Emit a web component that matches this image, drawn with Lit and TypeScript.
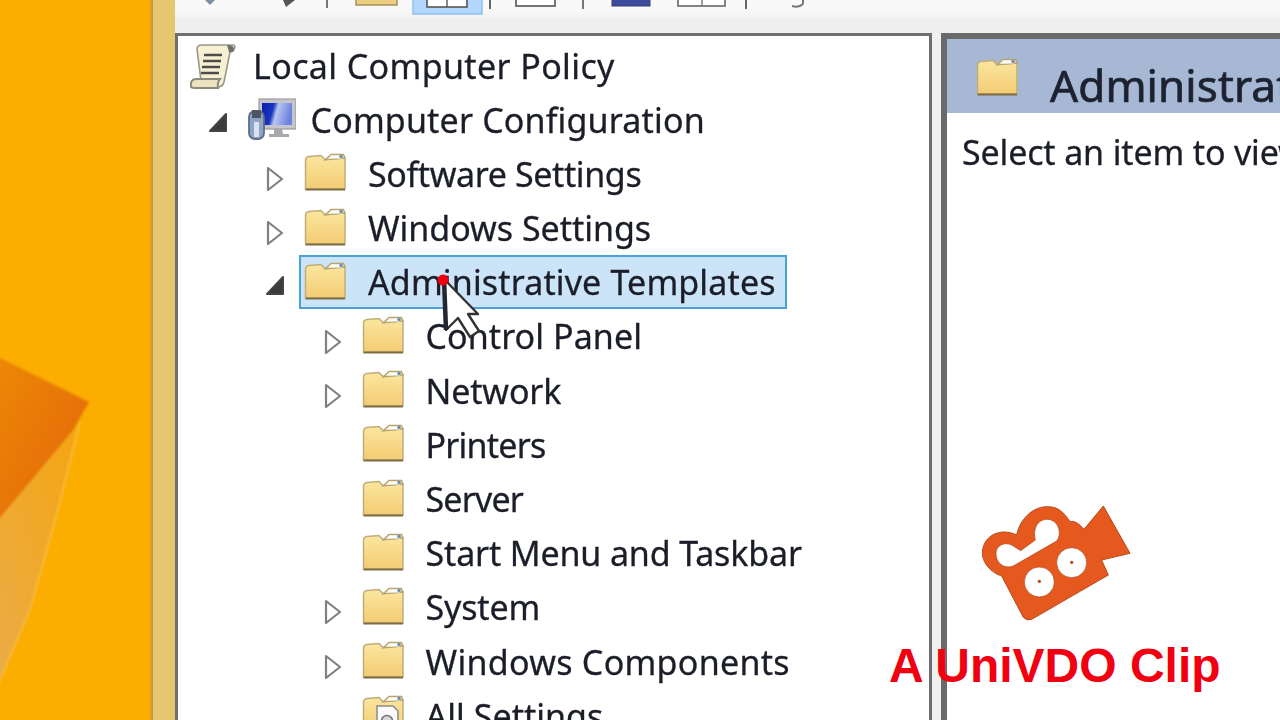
import { LitElement, html, css, svg } from "lit";
import { customElement } from "lit/decorators.js";

type Node = { label: string; depth: number; ls: number; exp?: "open" | "closed"; icon?: "folder" | "scroll" | "computer" | "settings"; sel?: boolean };

const NODES: Node[] = [
  { label: "Local Computer Policy", depth: 0, ls: 0.38, icon: "scroll" },
  { label: "Computer Configuration", depth: 1, ls: 0.17, exp: "open", icon: "computer" },
  { label: "Software Settings", depth: 2, ls: -0.38, exp: "closed" },
  { label: "Windows Settings", depth: 2, ls: -0.02, exp: "closed" },
  { label: "Administrative Templates", depth: 2, ls: 0.14, exp: "open", sel: true },
  { label: "Control Panel", depth: 3, ls: 0.08, exp: "closed" },
  { label: "Network", depth: 3, ls: -0.15, exp: "closed" },
  { label: "Printers", depth: 3, ls: -0.78 },
  { label: "Server", depth: 3, ls: -0.82 },
  { label: "Start Menu and Taskbar", depth: 3, ls: -0.15 },
  { label: "System", depth: 3, ls: -0.15, exp: "closed" },
  { label: "Windows Components", depth: 3, ls: 0.29, exp: "closed" },
  { label: "All Settings", depth: 3, ls: 0.03, icon: "settings" },
];

const folderBody = svg`
  <path d="M1.5 37V8.5Q1.5 5 5 4.5L17 3.5L21 7.5L41 6V37Z" fill="url(#fg)" stroke="#bfae7c" stroke-width="1.5"/>
  <path d="M21 8L27 2.5H39.5L41 6Z" fill="#efe4c0" stroke="#b5a472" stroke-width="1.3"/>
  <path d="M27 3.5H36L38 6.5H25Z" fill="#fdfdfd"/>
  <circle cx="37" cy="4.4" r="1.7" fill="#6f8bb0"/>
  <path d="M1.5 37.5H41" stroke="#7f6d42" stroke-width="2.2"/>`;

const folderDefs = svg`<defs><linearGradient id="fg" x1="0" y1="0" x2="0" y2="1"><stop offset="0" stop-color="#fbe69e"/><stop offset="1" stop-color="#f3cc74"/></linearGradient></defs>`;

function folderIcon() {
  return html`<svg class="ic folder" viewBox="0 0 42 39" width="42" height="39">${folderDefs}${folderBody}</svg>`;
}

function settingsIcon() {
  return html`<svg class="ic folder" viewBox="0 0 42 39" width="42" height="39">${folderDefs}${folderBody}
    <path d="M15 12H31L36 17V39H15Z" fill="#fafafa" stroke="#8b8b8b" stroke-width="1.5"/>
    <circle cx="25" cy="27" r="5.5" fill="#d8d8d8" stroke="#777" stroke-width="1.6"/></svg>`;
}

function scrollIcon() {
  return html`<svg class="ic scroll" viewBox="0 0 46 46" width="46" height="46">
    <path d="M7 5Q7 1 12 1H44Q46 3 43 7L40 8L34 38Q33 42 29 43H5L11 37Z" fill="#f7f0d2" stroke="#9a978a" stroke-width="1.6"/>
    <path d="M37 1Q44 1 44 5Q44 9 39 8Z" fill="#6f6f6f"/>
    <path d="M14 11H32M13 17H31M12 23H30M11 29H29" stroke="#4c4c4c" stroke-width="2.6"/>
    <path d="M1 43Q0 35 6 35H30Q27 38 28 44H5Q2 44 1 43Z" fill="#ebe3bf" stroke="#8d8a7c" stroke-width="2"/>
  </svg>`;
}

function computerIcon() {
  return html`<svg class="ic computer" viewBox="0 0 48 42" width="48" height="42">
    <defs><linearGradient id="sc" x1="0" y1="0" x2="1" y2="0.2"><stop offset="0" stop-color="#0a1fa8"/><stop offset="0.4" stop-color="#1b36c4"/><stop offset="0.55" stop-color="#b9c6f0"/><stop offset="1" stop-color="#6e83df"/></linearGradient></defs>
    <rect x="11" y="1" width="37" height="30" fill="#c4c6cb" stroke="#9a9ca2" stroke-width="1.2"/>
    <rect x="14" y="5" width="30" height="22" fill="url(#sc)"/>
    <path d="M26 31H34L35 36H41V39H21V36H26Z" fill="#a6a8ad"/>
    <rect x="1" y="13" width="15" height="28" rx="6" fill="#8ea4c4" stroke="#5f6d86" stroke-width="1.8"/>
    <path d="M6 24H11V39H6Z" fill="#d9e2ef"/>
    <rect x="4" y="12" width="9" height="8" fill="#4b5566"/>
  </svg>`;
}

function expander(kind?: "open" | "closed") {
  if (kind === "open")
    return html`<svg class="exp" viewBox="0 0 20 24" width="20" height="24"><path d="M18 4V21H2Z" fill="#3b3b3b" stroke="#444" stroke-width="2" stroke-linejoin="round"/></svg>`;
  if (kind === "closed")
    return html`<svg class="exp closed" viewBox="0 0 20 26" width="20" height="26"><path d="M3 2L17 13L3 24Z" fill="#fff" stroke="#80807e" stroke-width="2.2" stroke-linejoin="round"/></svg>`;
  return html``;
}

function nodeIcon(n: Node) {
  if (n.icon === "scroll") return scrollIcon();
  if (n.icon === "computer") return computerIcon();
  if (n.icon === "settings") return settingsIcon();
  return folderIcon();
}

@customElement("app-root")
export class AppRoot extends LitElement {
  static styles = css`
    :host {
      display: block;
      width: 1280px;
      height: 720px;
      overflow: hidden;
      position: relative;
      font-family: "Noto Sans", "Open Sans", sans-serif;
      color: #1b1e28;
    }
    .page { display: flex; width: 100%; height: 100%; }
    .wall {
      width: 153px;
      flex: none;
      position: relative;
      background: #fbad00;
      overflow: hidden;
      box-shadow: inset -3px 0 2px -1px #b89a48;
    }
    .wall svg { position: absolute; left: 0; top: 0; overflow: visible; filter: blur(1px); }
    .strip { width: 22px; flex: none; background: #e7c671; }
    .win {
      flex: 1;
      min-width: 0;
      display: flex;
      flex-direction: column;
      background: #f0f0f0;
      filter: blur(0.7px);
    }
    .toolbar { height: 33px; flex: none; background: linear-gradient(#f9f9f9 0, #f8f8f8 12px, #eeeeee 20px, #f0f0f0 100%); }
    .toolbar svg { display: block; }
    .panes { flex: 1; min-height: 0; display: flex; }
    .tree {
      width: 757px;
      flex: none;
      box-sizing: border-box;
      background: #fff;
      border: solid #6f6f6f;
      border-width: 3px 3px 0 3px;
      padding: 2px 0 0 6px;
      overflow: hidden;
    }
    .row { height: 54.2px; display: flex; align-items: stretch; white-space: nowrap; }
    .slot { width: 34px; flex: none; display: flex; align-items: center; }
    .exp { display: block; margin-top: 6px; }
    .exp.closed { margin-top: 11px; }
    .item {
      display: flex;
      align-items: center;
      border: 2px solid transparent;
      box-sizing: border-box;
      height: 54px;
      padding: 0 9px 0 3px;
    }
    .item.sel { background: #cce4f7; border-color: #4aa3d6; }
    .ic { display: block; flex: none; }
    .folder { margin-right: 22px; margin-top: -3px; }
    .scroll { margin: 3px 17px 0 1px; }
    .computer { margin: -1px 15px 0 1px; }
    .label { font-size: 34px; line-height: 1; padding-top: 1px; -webkit-text-stroke: 0.3px currentColor; }
    .gap { width: 9px; flex: none; }
    .detail {
      flex: 1;
      min-width: 0;
      background: #fff;
      border: solid #6a6a6a;
      border-width: 6px 0 0 6px;
      display: flex;
      flex-direction: column;
      overflow: hidden;
    }
    .head {
      height: 74px;
      flex: none;
      background: #a6b8d4;
      display: flex;
      align-items: center;
      padding-left: 29px;
      white-space: nowrap;
    }
    .head .ic { margin: 0 32px 0 0; }
    .head span { font-size: 44px; letter-spacing: 0.1px; color: #1c2230; padding-top: 18px; -webkit-text-stroke: 0.7px currentColor; }
    .hint { font-size: 34px; line-height: 1; padding: 22px 0 0 15px; white-space: nowrap; letter-spacing: -0.15px; -webkit-text-stroke: 0.3px currentColor; }
    .cursor { position: absolute; left: 430px; top: 265px; filter: blur(0.6px); }
    .logo { position: absolute; left: 960px; top: 490px; filter: blur(0.5px); }
    .brand {
      position: absolute;
      left: 889px;
      top: 639px;
      font: bold 48px/54px "Liberation Sans", Arial, sans-serif;
      color: #f00010;
      white-space: nowrap;
    }
  `;

  private toolbarArt() {
    return html`<svg viewBox="0 0 1105 33" width="1105" height="33">
      <path d="M30 0H40L35 5Z" fill="#7d8ea6"/>
      <path d="M108 0H120L111 7Z" fill="#555"/>
      <rect x="151" y="0" width="2" height="8" fill="#777"/>
      <rect x="181" y="-4" width="41" height="9" fill="#eccd7f" stroke="#a08a58" stroke-width="1.4"/>
      <rect x="238" y="-2" width="69" height="16" fill="#b3d7fb" stroke="#8fc0f2" stroke-width="1.5"/>
      <rect x="252" y="-4" width="40" height="11" fill="#fff" stroke="#555" stroke-width="1.6"/>
      <path d="M272 0V7" stroke="#555" stroke-width="1.4"/>
      <rect x="314" y="0" width="2" height="9" fill="#666"/>
      <rect x="341" y="-4" width="39" height="10" fill="#fff" stroke="#666" stroke-width="1.8"/>
      <rect x="407" y="0" width="2" height="9" fill="#777"/>
      <rect x="437" y="-4" width="38" height="10" fill="#3d4a9e" stroke="#36406e" stroke-width="1"/>
      <rect x="503" y="-4" width="47" height="10" fill="#fff" stroke="#666" stroke-width="1.6"/>
      <path d="M527 0V6" stroke="#777" stroke-width="1.4"/>
      <rect x="570" y="0" width="2" height="9" fill="#666"/>
      <path d="M628 4Q624 8 617 6M628 0V4" stroke="#777" stroke-width="2" fill="none"/>
    </svg>`;
  }

  render() {
    return html`
      <div class="page">
        <div class="wall">
          <svg viewBox="0 0 153 720" width="153" height="720">
            <defs>
              <linearGradient id="ora" x1="0" y1="0" x2="1" y2="1"><stop offset="0" stop-color="#ee8a06"/><stop offset="1" stop-color="#e2640a"/></linearGradient>
              <linearGradient id="wed" x1="1" y1="0" x2="0" y2="1"><stop offset="0" stop-color="#f6a50f"/><stop offset="1" stop-color="#e8ad4e"/></linearGradient>
            </defs>
            <path d="M-12 352L89 402L72 432L-12 534Z" fill="url(#ora)"/>
            <path d="M80 422L58 510L30 610L-12 708V532Z" fill="url(#wed)"/>
            <path d="M80 422L58 510L30 610L-12 708" fill="none" stroke="#f9bb3c" stroke-width="2"/>
          </svg>
        </div>
        <div class="strip"></div>
        <div class="win">
          <div class="toolbar">${this.toolbarArt()}</div>
          <div class="panes">
            <div class="tree">
              ${NODES.map((n) => html`
                <div class="row" style="padding-left:${n.depth ? n.depth * 57.5 - 34 : 0}px">
                  ${n.depth ? html`<div class="slot">${expander(n.exp)}</div>` : ""}
                  <div class="item ${n.sel ? "sel" : ""}">
                    ${nodeIcon(n)}
                    <span class="label" style="letter-spacing:${n.ls}px">${n.label}</span>
                  </div>
                </div>`)}
            </div>
            <div class="gap"></div>
            <div class="detail">
              <div class="head">${folderIcon()}<span>Administrative Templates</span></div>
              <div class="hint">Select an item to view its description.</div>
            </div>
          </div>
        </div>
      </div>
      <svg class="cursor" viewBox="0 0 60 80" width="60" height="80">
        <path d="M14 14L16 65L28 53L40 72L49 66L38 49L48 49Z" fill="#fff" stroke="#333" stroke-width="2.4" stroke-linejoin="round"/>
        <path d="M14 14L16 65" stroke="#22262e" stroke-width="4.5"/>
        <circle cx="13" cy="15" r="5.5" fill="#ee0010"/>
      </svg>
      <svg class="logo" viewBox="0 0 600 450" width="200" height="150">
        <path d="M430 48L510 190L425 210L445 255L215 388Q200 394 190 382L125 258C85 245 55 205 72 165C85 130 130 115 170 135C180 85 225 40 280 52C305 58 320 80 330 95C345 90 360 105 372 118Z" fill="#e5591e" stroke="#b9481a" stroke-width="3" stroke-linejoin="round"/>
        <path d="M108 190C108 165 135 155 155 165L182 182L226 150C218 120 230 88 262 88C290 88 305 120 295 145L290 153L165 225C140 240 108 225 108 190Z" fill="#fff" stroke="#a8431a" stroke-width="2"/>
        <circle cx="238" cy="276" r="45" fill="#fff" stroke="#a8431a" stroke-width="2"/>
        <circle cx="238" cy="274" r="5" fill="#b9481a"/>
        <circle cx="335" cy="218" r="45" fill="#fff" stroke="#a8431a" stroke-width="2"/>
        <circle cx="335" cy="217" r="5" fill="#b9481a"/>
      </svg>
      <div class="brand">A UniVDO Clip</div>
    `;
  }
}
